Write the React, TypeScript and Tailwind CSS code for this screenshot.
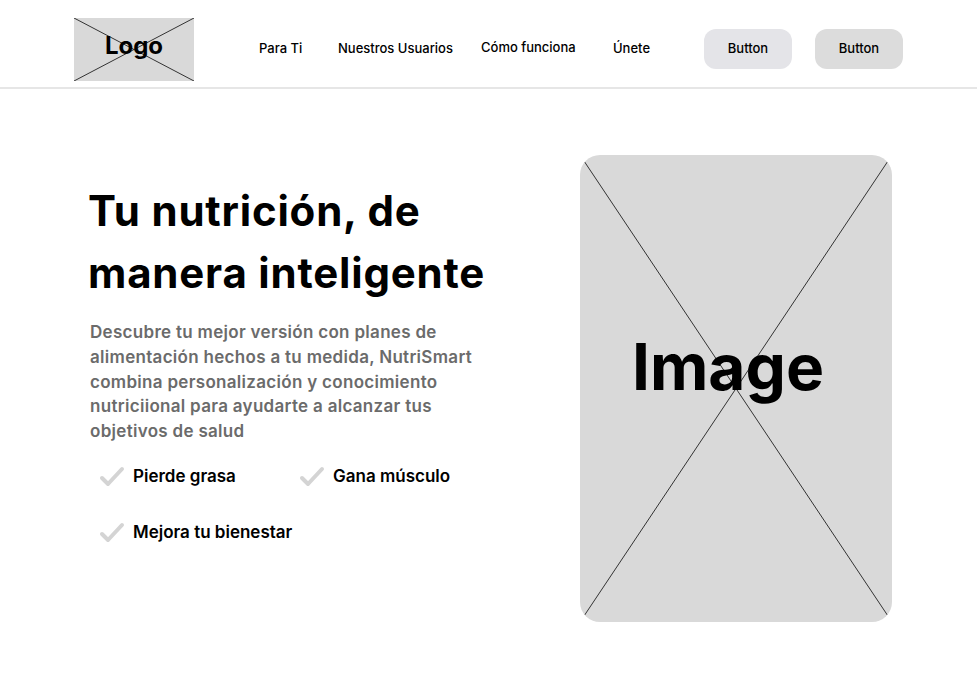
import React from 'react';

const font = { fontFamily: 'Inter, "Noto Sans", sans-serif' };

const CrossBox = ({ className, children }: { className: string; children?: React.ReactNode }) => (
  <div className={`relative bg-[#d9d9d9] ${className}`}>
    <svg className="absolute inset-0 w-full h-full" preserveAspectRatio="none" viewBox="0 0 100 100">
      <line x1="0" y1="0" x2="100" y2="100" stroke="#333" strokeWidth="1" vectorEffect="non-scaling-stroke" />
      <line x1="100" y1="0" x2="0" y2="100" stroke="#333" strokeWidth="1" vectorEffect="non-scaling-stroke" />
    </svg>
    {children}
  </div>
);

const CheckIcon = () => (
  <svg width="26" height="22" viewBox="0 0 26 22" className="shrink-0">
    <path d="M3 12 L9 18 L23 3" fill="none" stroke="#d4d4d4" strokeWidth="4" strokeLinecap="round" strokeLinejoin="round" />
  </svg>
);

const Feature = ({ label }: { label: string }) => (
  <div className="flex items-center gap-[8px]">
    <CheckIcon />
    <span className="text-[17px] font-semibold text-black">{label}</span>
  </div>
);

export default function App() {
  return (
    <div className="w-[977px] h-[696px] bg-white overflow-hidden" style={font}>
      <header className="h-[89px] border-b-2 border-[#e6e6e6] flex items-center pl-[74px] pt-[11px]">
        <CrossBox className="w-[120px] h-[63px] flex items-center justify-center">
          <span className="relative text-[24px] font-bold text-black -mt-[6px]">Logo</span>
        </CrossBox>
        <nav className="flex items-center text-[13px] font-medium text-black ml-[65px]">
          <span className="w-[79px]">Para Ti</span>
          <span className="w-[143px]">Nuestros Usuarios</span>
          <span className="w-[132px] -mt-[2px]">Cómo funciona</span>
          <span>Únete</span>
        </nav>
        <div className="flex items-center gap-[23px] ml-auto mr-[74px] -mt-[1px]">
          <button className="w-[88px] h-[40px] rounded-[12px] bg-[#e4e4e8] text-[13px] font-medium text-black">Button</button>
          <button className="w-[88px] h-[40px] rounded-[12px] bg-[#dcdcdc] text-[13px] font-medium text-black">Button</button>
        </div>
      </header>

      <main className="flex pt-[66px]">
        <section className="w-[492px] pl-[88px] pt-[25px]">
          <h1 className="text-[42px] font-bold leading-[62px] text-black tracking-[0.8px]">
            Tu nutrición, de
            <br />
            manera inteligente
          </h1>
          <p className="mt-[16px] pl-[2px] text-[17px] font-semibold leading-[24.8px] tracking-[0.3px] text-[#6b6b6b]">
            Descubre tu mejor versión con planes de alimentación hechos a tu medida, NutriSmart combina personalización y conocimiento nutriciional para ayudarte a alcanzar tus objetivos de salud
          </p>
          <div className="grid grid-cols-[200px_1fr] gap-y-[31px] mt-[20px] pl-[11px]">
            <Feature label="Pierde grasa" />
            <Feature label="Gana músculo" />
            <Feature label="Mejora tu bienestar" />
          </div>
        </section>
        <div className="ml-[88px]">
          <CrossBox className="w-[312px] h-[467px] rounded-[20px] overflow-hidden flex items-center justify-center">
            <span className="relative text-[64px] font-bold text-black -mt-[44px] -ml-[16px]">Image</span>
          </CrossBox>
        </div>
      </main>
    </div>
  );
}
